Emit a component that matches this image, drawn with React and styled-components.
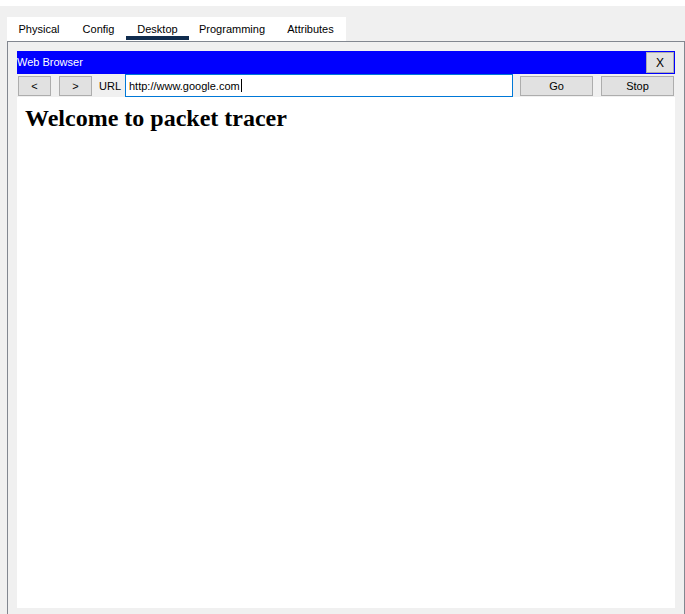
import React from "react";
import styled, { createGlobalStyle } from "styled-components";

const Global = createGlobalStyle`
  html, body { margin: 0; padding: 0; height: 100%; }
  body { font-family: "Liberation Sans", Arial, sans-serif; font-size: 11px; color: #000; }
  #root { height: 100%; }
`;

const Page = styled.div`
  box-sizing: border-box;
  height: 100vh;
  background: #f0f0f0;
  border-top: 6px solid #ffffff;
  display: flex;
  flex-direction: column;
  overflow: hidden;
`;

const TabStrip = styled.div`
  display: flex;
  align-self: flex-start;
  margin: 11px 0 0 7px;
  height: 24px;
  background: #ffffff;
`;

const Tab = styled.div`
  position: relative;
  width: ${(p) => p.$w}px;
  text-align: center;
  line-height: 24px;
  font-size: 11px;
  white-space: nowrap;
  &::after {
    content: "";
    display: ${(p) => (p.$active ? "block" : "none")};
    position: absolute;
    left: 0;
    right: 0;
    bottom: 1px;
    height: 4px;
    background: #102c4e;
  }
`;

const Panel = styled.div`
  box-sizing: border-box;
  flex: 1;
  width: 678px;
  margin-left: 7px;
  border: 1px solid #828790;
  border-bottom: none;
  padding: 9px 9px 6px 9px;
  display: flex;
  flex-direction: column;
  min-height: 0;
`;

const TitleBar = styled.div`
  height: 23px;
  background: #0000ff;
  display: flex;
  align-items: center;
  justify-content: space-between;
`;

const Title = styled.span`
  color: #ffffff;
  font-size: 11px;
  line-height: 23px;
`;

const Button = styled.div`
  box-sizing: border-box;
  width: ${(p) => p.$w}px;
  height: ${(p) => p.$h || 20}px;
  margin-left: ${(p) => p.$ml || 0}px;
  margin-right: ${(p) => p.$mr || 0}px;
  background: #e1e1e1;
  border: 1px solid #adadad;
  display: flex;
  align-items: center;
  justify-content: center;
  font-size: ${(p) => p.$fs || 11}px;
  flex-shrink: 0;
`;

const Toolbar = styled.div`
  height: 23px;
  display: flex;
  align-items: center;
`;

const Label = styled.span`
  margin-left: ${(p) => p.$ml}px;
  font-size: 11px;
  width: 22px;
  flex-shrink: 0;
`;

const UrlField = styled.div`
  box-sizing: border-box;
  width: 388px;
  height: 23px;
  margin-left: 4px;
  background: #ffffff;
  border: 1px solid #0078d7;
  padding-left: 3px;
  display: flex;
  align-items: center;
  font-size: 11px;
  flex-shrink: 0;
`;

const Caret = styled.span`
  display: inline-block;
  width: 1px;
  height: 13px;
  background: #000;
  margin-left: 1px;
`;

const Content = styled.div`
  flex: 1;
  background: #ffffff;
  padding: 8px;
`;

const Heading = styled.h1`
  margin: 0;
  font-family: "Liberation Serif", "Times New Roman", serif;
  font-weight: bold;
  font-size: 24px;
  line-height: normal;
`;

const tabs = [
  { label: "Physical", w: 64 },
  { label: "Config", w: 55 },
  { label: "Desktop", w: 63 },
  { label: "Programming", w: 86 },
  { label: "Attributes", w: 71 },
];

export default function App() {
  return (
    <>
      <Global />
      <Page>
        <TabStrip>
          {tabs.map((t) => (
            <Tab key={t.label} $w={t.w} $active={t.label === "Desktop"}>
              {t.label}
            </Tab>
          ))}
        </TabStrip>
        <Panel>
          <TitleBar>
            <Title>Web Browser</Title>
            <Button $w={28} $h={21} $mr={1} $fs={12}>
              X
            </Button>
          </TitleBar>
          <Toolbar>
            <Button $w={33} $ml={1}>&lt;</Button>
            <Button $w={33} $ml={8}>&gt;</Button>
            <Label $ml={7}>URL</Label>
            <UrlField>
              http://www.google.com
              <Caret />
            </UrlField>
            <Button $w={73} $ml={7}>Go</Button>
            <Button $w={73} $ml={8}>Stop</Button>
          </Toolbar>
          <Content>
            <Heading>Welcome to packet tracer</Heading>
          </Content>
        </Panel>
      </Page>
    </>
  );
}
